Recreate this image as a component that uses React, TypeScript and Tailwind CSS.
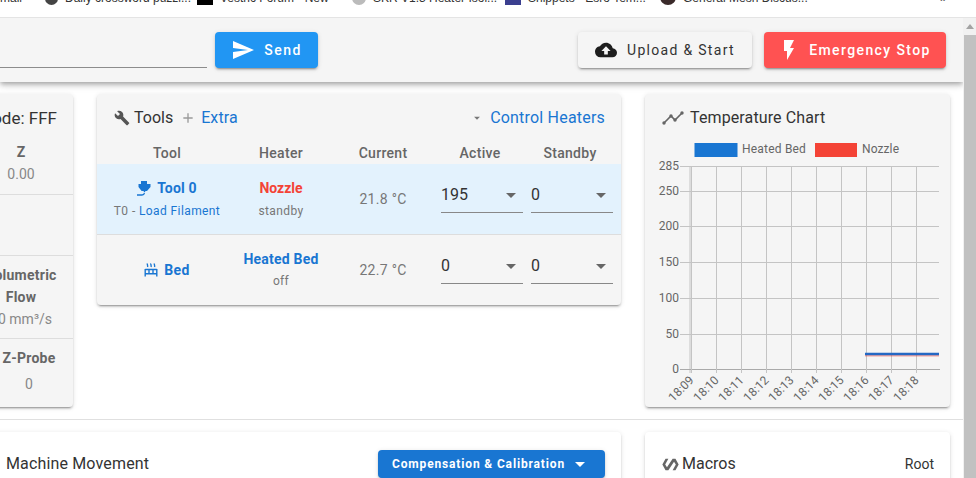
import React from "react";

const cardShadow =
    "shadow-[0_3px_1px_-2px_rgba(0,0,0,0.2),0_2px_2px_0_rgba(0,0,0,0.14),0_1px_5px_0_rgba(0,0,0,0.12)]";

const paths = {
    send: "M2,21L23,12L2,3V10L17,12L2,14V21Z",
    cloudUpload:
        "M14,13V17H10V13H7L12,8L17,13M19.35,10.03C18.67,6.59 15.64,4 12,4C9.11,4 6.6,5.64 5.35,8.03C2.34,8.36 0,10.9 0,14A6,6 0 0,0 6,20H19A5,5 0 0,0 24,15C24,12.36 21.95,10.22 19.35,10.03Z",
    flash: "M7,2V13H10V22L17,10H13L17,2H7Z",
    wrench:
        "M22.7,19L13.6,9.9C14.5,7.6 14,4.9 12.1,3C10.1,1 7.1,0.6 4.7,1.7L9,6L6,9L1.6,4.7C0.4,7.1 0.9,10.1 2.9,12.1C4.8,14 7.5,14.5 9.8,13.6L18.9,22.7C19.3,23.1 19.9,23.1 20.3,22.7L22.6,20.4C23.1,20 23.1,19.3 22.7,19Z",
    plus: "M19,13H13V19H11V13H5V11H11V5H13V11H19V13Z",
    menuDown: "M7,10L12,15L17,10H7Z",
    polymer: "M19,4H15L7.03,16L4.5,12L9,4H5L.5,12L5,20H9L16.97,8L19.5,12L15,20H19L23.5,12L19,4Z",
};

function Mdi({ d, className }: { d: string; className: string }) {
    return (
        <svg viewBox="0 0 24 24" className={className} fill="currentColor">
            <path d={d} />
        </svg>
    );
}

function NozzleIcon() {
    return (
        <svg viewBox="0 0 14 16" className="w-[14px] h-[16px] text-[#1976d2]" fill="currentColor">
            <path d="M4 1h6v3h3.5v3L10 11H8.6L7.5 12.5 6.4 11H4.6L1.5 7V4H4z" />
            <path d="M0 15h5c1.5 0 2.2-.8 2.5-2" fill="none" stroke="currentColor" strokeWidth="1.3" />
        </svg>
    );
}

function BedIcon() {
    return (
        <svg viewBox="0 0 14 14" className="w-[14px] h-[14px] text-[#1976d2]" fill="none" stroke="currentColor" strokeWidth="1.4">
            <path d="M3.5 .5c-.8 1 .8 2 0 3.5M7 .5c-.8 1 .8 2 0 3.5M10.5 .5c-.8 1 .8 2 0 3.5" />
            <path d="M1.2 6.5h11.6M.5 10.8h13M1.2 6v7.5M5 6.5v4.3M9 6.5v4.3M12.8 6v7.5" />
        </svg>
    );
}

const bookmarks = [
    { text: "Daily crossword puzzl...", width: "w-[152px]", icon: "bg-[#444] rounded-full w-[13px]" },
    { text: "Vestric Forum - New", width: "w-[155px]", icon: "bg-black w-[16px]" },
    { text: "SKR V1.3 Heater Isol...", width: "w-[153px]", icon: "bg-[#bbb] rounded-full w-[14px]" },
    { text: "Snippets - Esro Tem...", width: "w-[155px]", icon: "bg-[#3b3f8f] w-[16px]" },
    { text: "General Mesh Discus...", width: "w-[280px]", icon: "bg-[#3a2a2a] rounded-full w-[16px]" },
];

function BookmarkBar() {
    return (
        <div className="h-[18px] flex-none overflow-hidden bg-white border-b border-[#e4e4e4] font-['Liberation_Sans',sans-serif] text-[12px] leading-[16px] text-[#333]">
            <div className="flex -mt-[11px] whitespace-nowrap">
                <span className="w-[45px] translate-y-px">mail</span>
                {bookmarks.map((b) => (
                    <span key={b.text} className={`${b.width} flex items-center gap-[7px] overflow-hidden`}>
                        <span className={`${b.icon} h-[16px] flex-none`} />
                        <span className="translate-y-px">{b.text}</span>
                    </span>
                ))}
                <span className="translate-y-px text-[#555]">»</span>
            </div>
        </div>
    );
}

function AppBar() {
    return (
        <header className="relative z-10 h-[64px] flex-none flex items-center pr-[17px] bg-[#f5f5f5] shadow-[0_2px_4px_-1px_rgba(0,0,0,0.2),0_4px_5px_0_rgba(0,0,0,0.14),0_1px_10px_0_rgba(0,0,0,0.12)]">
            <div className="w-[207px] h-[36px] border-b border-[#8c8c8c]" />
            <button className={`ml-2 w-[103px] h-[36px] flex items-center justify-center gap-[9px] rounded bg-[#2196f3] text-white text-[14px] font-medium tracking-[1.5px] ${cardShadow}`}>
                <Mdi d={paths.send} className="w-[24px] h-[24px]" />
                Send
            </button>
            <div className="flex-1" />
            <button className={`w-[174px] h-[36px] flex items-center justify-center gap-[10px] rounded bg-[#f5f5f5] text-[#333] text-[14px] font-normal tracking-[1.3px] ${cardShadow}`}>
                <Mdi d={paths.cloudUpload} className="w-[22px] h-[22px] text-[#1e1e1e]" />
                Upload &amp; Start
            </button>
            <button className={`ml-3 w-[182px] h-[36px] flex items-center justify-center gap-[8px] rounded bg-[#ff5252] text-white text-[14px] font-medium tracking-[1.4px] pr-[2px] ${cardShadow}`}>
                <Mdi d={paths.flash} className="w-[24px] h-[24px]" />
                Emergency Stop
            </button>
        </header>
    );
}

function StatusCard() {
    return (
        <section className={`w-[200px] h-[313px] flex-none -ml-[127px] rounded bg-[#f5f5f5] ${cardShadow} text-[14px] leading-[22px]`}>
            <div className="h-[47px] flex items-center justify-end pr-4 text-[17px] text-[#333]">Mode: FFF</div>
            <div className="h-[54px] border-b border-[#ddd] flex justify-end pr-[31px]">
                <div className="w-[42px] text-center">
                    <div className="font-bold tracking-[0.25px] text-[#666]">Z</div>
                    <div className="text-[#888]">0.00</div>
                </div>
            </div>
            <div className="h-[61px] border-b border-[#ddd]" />
            <div className="h-[83px] pt-2 border-b border-[#ddd] flex justify-end pr-[31px]">
                <div className="w-[42px] flex flex-col items-center whitespace-nowrap text-center">
                    <div className="font-bold tracking-[0.25px] text-[#666]">Volumetric</div>
                    <div className="font-bold tracking-[0.25px] text-[#666]">Flow</div>
                    <div className="ml-[8px] text-[#888]">0 mm³/s</div>
                </div>
            </div>
            <div className="pt-2 flex justify-end pr-[23px]">
                <div className="w-[42px] flex flex-col items-center whitespace-nowrap text-center">
                    <div className="font-bold tracking-[0.25px] text-[#666]">Z-Probe</div>
                    <div className="mt-1 text-[#888]">0</div>
                </div>
            </div>
        </section>
    );
}

function HeaterSelect({ value }: { value: string }) {
    return (
        <div className="w-[82px] h-[28px] pb-[7px] border-b border-[#888] flex items-center justify-between pr-[7px] text-[16px] text-[#333]">
            <span>{value}</span>
            <span className="w-0 h-0 border-x-[5px] border-x-transparent border-t-[5px] border-t-[#666]" />
        </div>
    );
}

const rowGrid = "grid grid-cols-[140px_88px_116px_90px_90px] items-center text-center";

function ToolsCard() {
    return (
        <section className={`w-[524px] flex-none rounded bg-[#f5f5f5] ${cardShadow} overflow-hidden`}>
            <div className="h-[47px] flex items-center pl-[17px] pr-4 text-[16px] text-[#333]">
                <Mdi d={paths.wrench} className="w-[16px] h-[16px] mr-[4px] text-[#555]" />
                <span>Tools</span>
                <Mdi d={paths.plus} className="ml-[7px] w-[16px] h-[16px] text-[#999]" />
                <span className="ml-[5px] tracking-[0.1px] text-[#1976d2]">Extra</span>
                <div className="flex-1" />
                <Mdi d={paths.menuDown} className="w-[14px] h-[14px] mr-[3px] text-[#777]" />
                <span className="ml-[3px] tracking-[0.2px] text-[#1976d2]">Control Heaters</span>
            </div>
            <div className={`${rowGrid} h-[23px] pt-[2px] text-[14px] font-medium tracking-[0.3px] text-[#666]`}>
                <div>Tool</div>
                <div>Heater</div>
                <div>Current</div>
                <div className="pr-[12px]">Active</div>
                <div className="pr-[12px]">Standby</div>
            </div>
            <div className={`${rowGrid} h-[71px] bg-[#e3f2fd] border-b border-[#ddd]`}>
                <div className="pt-px text-[12px] leading-[23px] tracking-[0.4px] text-[#777]">
                    <div className="flex items-center justify-center gap-[6px] text-[14px] font-bold tracking-[0.2px] text-[#1976d2]">
                        <NozzleIcon />
                        Tool 0
                    </div>
                    T0 - <span className="text-[#1976d2]">Load Filament</span>
                </div>
                <div className="pt-px text-[12px] leading-[23px] tracking-[0.4px] text-[#777]">
                    <div className="text-[14px] font-bold tracking-normal text-[#f44336]">Nozzle</div>
                    standby
                </div>
                <div className="text-[14px] tracking-[0.3px] text-[#777]">21.8 °C</div>
                <HeaterSelect value="195" />
                <HeaterSelect value="0" />
            </div>
            <div className={`${rowGrid} h-[70px]`}>
                <div className="flex items-center justify-center gap-[6px] text-[14px] font-bold tracking-[0.3px] text-[#1976d2]">
                    <BedIcon />
                    Bed
                </div>
                <div className="text-[12px] leading-[22px] tracking-[0.3px] text-[#777]">
                    <div className="text-[14px] font-bold tracking-[0.2px] text-[#1976d2]">Heated Bed</div>
                    off
                </div>
                <div className="text-[14px] tracking-[0.3px] text-[#777]">22.7 °C</div>
                <HeaterSelect value="0" />
                <HeaterSelect value="0" />
            </div>
        </section>
    );
}

const yTicks = [
    { label: "285", y: 166.5 },
    { label: "250", y: 191.5 },
    { label: "200", y: 226.5 },
    { label: "150", y: 262.5 },
    { label: "100", y: 298.5 },
    { label: "50", y: 334.5 },
    { label: "0", y: 369.5 },
];

const xTicks = [
    { label: "18:09", x: 691.5 },
    { label: "18:10", x: 716.5 },
    { label: "18:11", x: 741.5 },
    { label: "18:12", x: 766.5 },
    { label: "18:13", x: 791.5 },
    { label: "18:14", x: 816.5 },
    { label: "18:15", x: 841.5 },
    { label: "18:16", x: 866.5 },
    { label: "18:17", x: 891.5 },
    { label: "18:18", x: 916.5 },
];

function ChartCard() {
    return (
        <section className={`w-[305px] h-[313px] flex-none ml-6 rounded bg-[#f5f5f5] ${cardShadow}`}>
            <div className="h-[47px] flex items-center pl-[17px] text-[16px] tracking-[0.12px] text-[#333]">
                <svg viewBox="0 0 22 16" className="w-[22px] h-[16px] mr-[6px] text-[#666]" fill="currentColor">
                    <path d="M2 13l7-7 4 4 7-7" fill="none" stroke="currentColor" strokeWidth="1.6" />
                    <circle cx="2" cy="13" r="1.7" />
                    <circle cx="9" cy="6" r="1.7" />
                    <circle cx="13" cy="10" r="1.7" />
                    <circle cx="20" cy="3" r="1.7" />
                </svg>
                Temperature Chart
            </div>
            {/* canvas-like temperature plot, coordinates are page pixels */}
            <svg viewBox="645 141 305 266" className="w-[305px] h-[266px] block" fontFamily="Roboto, sans-serif" fontSize="12" fill="#666">
                <rect x="694.5" y="143" width="43" height="14" fill="#1976d2" />
                <text x="742" y="153" letterSpacing="0.2">Heated Bed</text>
                <rect x="815" y="143" width="42" height="14" fill="#f44336" />
                <text x="862" y="153" letterSpacing="0.1">Nozzle</text>
                {yTicks.map((t) => (
                    <g key={t.label}>
                        <line x1="680" x2="939" y1={t.y} y2={t.y} stroke="#c4c4c4" />
                        <text x="679" y={t.y + 3} textAnchor="end">{t.label}</text>
                    </g>
                ))}
                <line x1="690" x2="690" y1="166" y2="373" stroke="#c4c4c4" />
                <line x1="680" x2="940" y1="369.5" y2="369.5" stroke="#aaa" />
                {xTicks.map((t) => (
                    <g key={t.label}>
                        <line x1={t.x} x2={t.x} y1="166" y2="373" stroke="#c4c4c4" />
                        <text transform={`translate(${t.x + 3} 381) rotate(-45)`} textAnchor="end">{t.label}</text>
                    </g>
                ))}
                <line x1="865" x2="939" y1="355.4" y2="355.4" stroke="#f44336" strokeWidth="2" opacity="0.45" />
                <line x1="865" x2="939" y1="354" y2="354" stroke="#2468c4" strokeWidth="2.6" />
            </svg>
        </section>
    );
}

function BottomCards() {
    return (
        <div className="mt-3 flex">
            <section className={`w-[700px] h-[120px] flex-none -ml-[79px] rounded bg-white ${cardShadow}`}>
                <div className="h-[64px] flex items-start pt-[18px] pl-[85px] pr-4 text-[16px] text-[#333]">
                    <span className="mt-[2px] tracking-[0.15px]">Machine Movement</span>
                    <div className="flex-1" />
                    <button className={`w-[227px] h-[28px] flex items-center justify-center gap-[10px] pr-[6px] rounded bg-[#1976d2] text-white text-[12px] font-bold tracking-[0.85px] ${cardShadow}`}>
                        Compensation &amp; Calibration
                        <span className="w-0 h-0 border-x-[5px] border-x-transparent border-t-[5px] border-t-white" />
                    </button>
                </div>
            </section>
            <section className={`w-[305px] h-[120px] flex-none ml-6 rounded bg-white ${cardShadow}`}>
                <div className="h-[64px] flex items-center pl-[17px] pr-4 text-[16px] text-[#333]">
                    <Mdi d={paths.polymer} className="w-[17px] h-[17px] mr-[3px] text-[#666]" />
                    <span>Macros</span>
                    <div className="flex-1" />
                    <span className="text-[14px]">Root</span>
                </div>
            </section>
        </div>
    );
}

function Scrollbar() {
    return (
        <div className="w-[13px] flex-none flex flex-col items-end bg-[#f1f1f1]">
            <div className="w-full h-[17px] flex items-center justify-center">
                <span className="w-0 h-0 border-x-[4px] border-x-transparent border-b-[5px] border-b-[#a3a3a3]" />
            </div>
            <div className="w-[12px] flex-1 bg-[#c1c1c1]" />
        </div>
    );
}

export default function App() {
    return (
        <div className="w-[976px] h-[478px] overflow-hidden flex flex-col bg-white font-['Roboto',sans-serif]">
            <BookmarkBar />
            <div className="flex flex-1 min-h-0">
                <main className="flex-1 min-w-0 overflow-hidden flex flex-col">
                    <AppBar />
                    <div className="pt-3 flex items-start">
                        <StatusCard />
                        <div className="ml-6">
                            <ToolsCard />
                        </div>
                        <ChartCard />
                    </div>
                    <div className="mt-3 border-t border-[#e0e0e0]" />
                    <BottomCards />
                </main>
                <Scrollbar />
            </div>
        </div>
    );
}
